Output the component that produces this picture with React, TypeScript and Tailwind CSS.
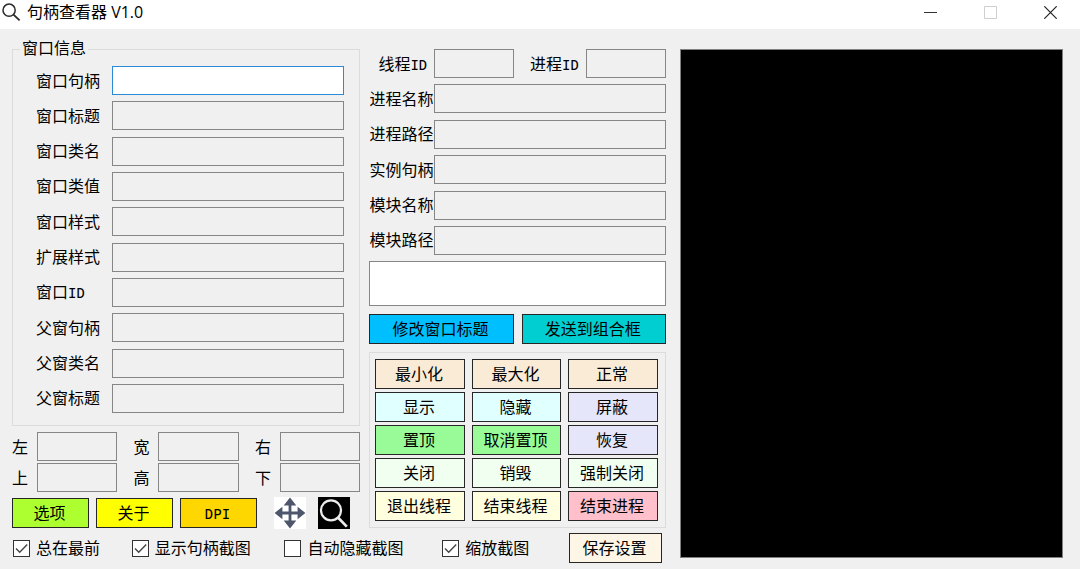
import { ReactNode } from 'react';

const fieldClass =
  'block h-[29px] min-w-0 border border-[#868686] bg-[#f0f0f0] px-1 outline-none';
const labelClass = 'shrink-0 pb-[2px]';
const actionClass =
  'h-[30px] border border-[#262626] pr-[2px] pb-[2px] text-center leading-none whitespace-nowrap';

function Mono({ children }: { children: ReactNode }) {
  return <span className="font-['DejaVu_Sans_Mono',monospace] text-[14px] leading-none">{children}</span>;
}

const infoFields: { id: string; label: ReactNode }[] = [
  { id: 'win-handle', label: '窗口句柄' },
  { id: 'win-title', label: '窗口标题' },
  { id: 'win-class', label: '窗口类名' },
  { id: 'win-class-value', label: '窗口类值' },
  { id: 'win-style', label: '窗口样式' },
  { id: 'win-ex-style', label: '扩展样式' },
  { id: 'win-id', label: <>窗口<Mono>ID</Mono></> },
  { id: 'parent-handle', label: '父窗句柄' },
  { id: 'parent-class', label: '父窗类名' },
  { id: 'parent-title', label: '父窗标题' },
];

const processFields = [
  { id: 'process-name', label: '进程名称' },
  { id: 'process-path', label: '进程路径' },
  { id: 'instance-handle', label: '实例句柄' },
  { id: 'module-name', label: '模块名称' },
  { id: 'module-path', label: '模块路径' },
];

const rectFields = [
  { id: 'left', label: '左' },
  { id: 'width', label: '宽' },
  { id: 'right', label: '右' },
  { id: 'top', label: '上' },
  { id: 'height', label: '高' },
  { id: 'bottom', label: '下' },
];

const actions = [
  { label: '最小化', color: 'bg-[#faebd7]' },
  { label: '最大化', color: 'bg-[#faebd7]' },
  { label: '正常', color: 'bg-[#faebd7]' },
  { label: '显示', color: 'bg-[#e0ffff]' },
  { label: '隐藏', color: 'bg-[#e0ffff]' },
  { label: '屏蔽', color: 'bg-[#e6e6fa]' },
  { label: '置顶', color: 'bg-[#98fb98]' },
  { label: '取消置顶', color: 'bg-[#98fb98]' },
  { label: '恢复', color: 'bg-[#e6e6fa]' },
  { label: '关闭', color: 'bg-[#f0fff0]' },
  { label: '销毁', color: 'bg-[#f0fff0]' },
  { label: '强制关闭', color: 'bg-[#f0fff0]' },
  { label: '退出线程', color: 'bg-[#ffffe0]' },
  { label: '结束线程', color: 'bg-[#ffffe0]' },
  { label: '结束进程', color: 'bg-[#ffc0cb]' },
];

const options = [
  { id: 'always-top', label: '总在最前', checked: true },
  { id: 'show-shot', label: '显示句柄截图', checked: true },
  { id: 'auto-hide', label: '自动隐藏截图', checked: false },
  { id: 'scale-shot', label: '缩放截图', checked: true },
];

function TitleBar() {
  return (
    <header className="flex h-[29px] items-center bg-white pb-[5px]">
      <svg className="ml-[2px] size-[19px]" viewBox="0 0 19 19" fill="none" stroke="#2b2b2b" aria-hidden="true">
        <circle cx="7.1" cy="7.2" r="6.1" strokeWidth="1.5" />
        <path d="M11.5 11.6L17.6 17.4" strokeWidth="1.9" />
      </svg>
      <h1 className="ml-[6px] font-['Open_Sans','Noto_Sans_CJK_SC',sans-serif] text-[16px] leading-[20px]">
        句柄查看器 V1.0
      </h1>
      <div className="ml-auto flex">
        <button type="button" aria-label="最小化窗口" className="flex h-6 w-[60px] items-center justify-center">
          <svg width="13" height="13" viewBox="0 0 13 13" aria-hidden="true">
            <path d="M0 6.5H13" stroke="#333" />
          </svg>
        </button>
        <button type="button" aria-label="最大化窗口" disabled className="flex h-6 w-[60px] items-center justify-center">
          <svg width="13" height="13" viewBox="0 0 13 13" aria-hidden="true">
            <path d="M.5.5H12.5V12.5H.5Z" fill="none" stroke="#cfcfcf" />
          </svg>
        </button>
        <button type="button" aria-label="关闭窗口" className="flex h-6 w-[60px] items-center justify-center">
          <svg width="13" height="13" viewBox="0 0 13 13" aria-hidden="true">
            <path d="M.3.3L12.7 12.7M12.7.3L.3 12.7" stroke="#222" strokeWidth="1.2" />
          </svg>
        </button>
      </div>
    </header>
  );
}

function InfoPanel() {
  return (
    <fieldset className="min-w-0 border border-[#dcdcdc]">
      <legend className="ml-[7px] px-[2px] pb-[4px] leading-[14px]">窗口信息</legend>
      <div className="flex min-h-[367px] flex-col justify-between pt-[8px] pr-[15px] pb-[12px] pl-[23px]">
        {infoFields.map((f, i) => (
          <div key={f.id} className="flex items-center">
            <label htmlFor={f.id} className={`${labelClass} w-[76px]`}>{f.label}</label>
            {i === 0 ? (
              <input id={f.id} className="block h-[29px] min-w-0 flex-1 border border-[#2a8ad8] bg-white px-1 outline-none" />
            ) : (
              <input id={f.id} readOnly className={`${fieldClass} flex-1`} />
            )}
          </div>
        ))}
      </div>
    </fieldset>
  );
}

function ToolRow() {
  return (
    <div className="flex items-center gap-[7px]">
      <button type="button" className={`${actionClass} w-[77px] bg-[#adff2f]`}>选项</button>
      <button type="button" className={`${actionClass} w-[77px] bg-[#ffff00]`}>关于</button>
      <button type="button" className={`${actionClass} w-[77px] bg-[#ffd700]`}><Mono>DPI</Mono></button>
      <div className="-my-px ml-[10px] flex gap-[12px]">
        <button type="button" aria-label="拖动" className="size-[32px] bg-white">
          <svg viewBox="0 0 32 32" fill="#4e566c" aria-hidden="true">
            <path d="M16 .6L22.3 8.4H17.4V14.6H23.6V9.8L31.4 16L23.6 22.3V17.4H17.4V23.6H22.3L16 31.4L9.7 23.6H14.6V17.4H8.4V22.3L.6 16L8.4 9.8V14.6H14.6V8.4H9.7Z" />
          </svg>
        </button>
        <button type="button" aria-label="查找" className="size-[32px] bg-black">
          <svg viewBox="0 0 32 32" fill="none" stroke="#ececec" aria-hidden="true">
            <circle cx="13" cy="13.3" r="10" strokeWidth="2.2" />
            <path d="M20.2 20.8L28.8 29.6" strokeWidth="2.7" />
          </svg>
        </button>
      </div>
    </div>
  );
}

function ProcessPanel() {
  return (
    <div className="flex min-h-[206px] flex-col justify-between">
      <div className="flex items-center">
        <label htmlFor="thread-id" className={`${labelClass} w-[65px] pl-[9px]`}>线程<Mono>ID</Mono></label>
        <input id="thread-id" readOnly className={`${fieldClass} flex-1`} />
        <label htmlFor="process-id" className={`${labelClass} w-[72px] pl-[16px]`}>进程<Mono>ID</Mono></label>
        <input id="process-id" readOnly className={`${fieldClass} flex-1`} />
      </div>
      {processFields.map((f) => (
        <div key={f.id} className="flex items-center">
          <label htmlFor={f.id} className={`${labelClass} w-[65px]`}>{f.label}</label>
          <input id={f.id} readOnly className={`${fieldClass} flex-1`} />
        </div>
      ))}
    </div>
  );
}

function OptionsRow() {
  return (
    <div className="mt-[5px] grid grid-cols-[119fr_153fr_158fr_127fr_97fr] items-center pl-[1px]">
      {options.map((o) => (
        <div key={o.id} className="flex items-center gap-[6px] whitespace-nowrap">
          <span className="grid size-[17px] shrink-0">
            <input
              id={o.id}
              type="checkbox"
              defaultChecked={o.checked}
              className="peer col-start-1 row-start-1 size-[17px] appearance-none border border-[#333] bg-white"
            />
            <svg
              className="pointer-events-none invisible col-start-1 row-start-1 size-[17px] peer-checked:visible"
              viewBox="0 0 17 17"
              fill="none"
              aria-hidden="true"
            >
              <path d="M3 8.6L6.7 12.3L14.2 4.6" stroke="#444" strokeWidth="1.4" />
            </svg>
          </span>
          <label htmlFor={o.id} className={labelClass}>{o.label}</label>
        </div>
      ))}
      <button type="button" className={`${actionClass} w-[93px] bg-[#fdf5e6]`}>保存设置</button>
    </div>
  );
}

export default function App() {
  return (
    <div className="flex min-h-screen flex-col bg-[#f0f0f0] font-['Noto_Sans_CJK_SC',sans-serif] text-[16px] leading-[20px] text-black">
      <TitleBar />
      <main className="flex gap-[14px] pt-[11px] pr-[17px] pb-[5px] pl-[12px]">
        <div className="min-w-0 flex-[655]">
          <div className="flex gap-[9px]">
            <section className="flex min-w-0 flex-[348] flex-col gap-[6px]">
              <InfoPanel />
              <div className="grid grid-cols-3 gap-x-[16px] gap-y-[2px]">
                {rectFields.map((f) => (
                  <div key={f.id} className="flex items-center">
                    <label htmlFor={f.id} className={`${labelClass} w-[25px]`}>{f.label}</label>
                    <input id={f.id} readOnly className={`${fieldClass} flex-1`} />
                  </div>
                ))}
              </div>
              <ToolRow />
            </section>
            <section className="min-w-0 flex-[296] pt-[9px]">
              <ProcessPanel />
              <textarea
                aria-label="新窗口标题"
                className="mt-[6px] block h-[45px] w-full resize-none border border-[#868686] bg-white px-1 outline-none"
              />
              <div className="mt-[8px] grid grid-cols-2 gap-[8px]">
                <button type="button" className={`${actionClass} bg-[#00bfff]`}>修改窗口标题</button>
                <button type="button" className={`${actionClass} bg-[#00ced1]`}>发送到组合框</button>
              </div>
              <div className="mt-[8px] grid grid-cols-3 gap-x-[7px] gap-y-[3px] border border-[#dcdcdc] py-[6px] pr-[7px] pl-[5px]">
                {actions.map((a) => (
                  <button key={a.label} type="button" className={`${actionClass} ${a.color}`}>{a.label}</button>
                ))}
              </div>
            </section>
          </div>
          <OptionsRow />
        </div>
        <div className="mt-[9px] mb-[5px] min-w-0 flex-[382] border border-[#808080] bg-black" />
      </main>
    </div>
  );
}
